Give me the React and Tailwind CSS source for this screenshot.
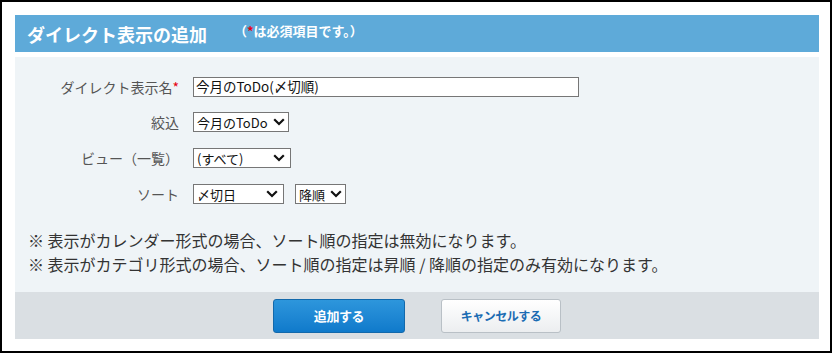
import React from "react";

const font = { fontFamily: '"Noto Sans CJK JP", "Noto Sans", sans-serif' };

const Chevron = () => (
  <svg width="12" height="8" viewBox="0 0 12 8" className="shrink-0">
    <path d="M1.2 1.2 L6 6 L10.8 1.2" fill="none" stroke="#111" strokeWidth="2.2" />
  </svg>
);

const FakeSelect = ({ value, width, pad = "pr-[5px]" }) => (
  <div
    className={`flex h-[20px] items-center justify-between border border-[#767676] bg-white pl-[3px] ${pad} text-[13px] leading-none text-[#111]`}
    style={{ width }}
  >
    <span className="whitespace-nowrap">{value}</span>
    <Chevron />
  </div>
);

const Row = ({ label, required, children }) => (
  <div className="flex h-[20px] items-center">
    <div className="w-[165px] pr-[1px] text-right text-[14px] leading-none text-[#555]">
      {label}
      {required && <span className="text-[#e60012]">*</span>}
    </div>
    <div className="ml-[13px] flex items-center gap-[11px]">{children}</div>
  </div>
);

export default function App() {
  return (
    <div
      className="h-[353px] w-[832px] border-2 border-black bg-white pl-[13px] pt-[13px]"
      style={font}
    >
      <div className="w-[804px]">
        {/* header */}
        <div className="flex h-[37px] items-center bg-[#5eaad9] pl-[12px]">
          <h2 className="text-[18px] font-bold leading-none text-white">ダイレクト表示の追加</h2>
          <span className="ml-[27px] -mt-[6px] text-[13px] font-bold leading-none text-white">
            （<span className="text-[#e60012]">*</span>は必須項目です。）
          </span>
        </div>

        {/* form body */}
        <div className="mt-[5px] h-[235px] bg-[#eff4f7] pt-[20px]">
          <div className="flex flex-col gap-[15px]">
            <Row label="ダイレクト表示名" required>
              <div className="flex h-[20px] w-[386px] items-center border border-[#767676] bg-white pl-[2px] text-[13.5px] leading-none text-[#111]">
                今月のToDo(〆切順)
              </div>
            </Row>
            <Row label="絞込">
              <FakeSelect value="今月のToDo" width="96px" pad="pr-[3px]" />
            </Row>
            <div className="mt-[1px]">
              <Row label="ビュー（一覧）">
                <FakeSelect value="(すべて)" width="98px" />
              </Row>
            </div>
            <div className="mt-[1px]">
              <Row label="ソート">
                <FakeSelect value="〆切日" width="91px" />
                <FakeSelect value="降順" width="51px" pad="pr-[3px]" />
              </Row>
            </div>
          </div>

          <div className="mt-[24px] pl-[13px] text-[16px] leading-[24px] text-[#333]">
            <p>※ 表示がカレンダー形式の場合、ソート順の指定は無効になります。</p>
            <p>※ 表示がカテゴリ形式の場合、ソート順の指定は昇順 / 降順の指定のみ有効になります。</p>
          </div>
        </div>

        {/* footer */}
        <div className="flex h-[47px] items-center justify-center gap-[36px] bg-[#dadfe3]">
          <button className="h-[34px] w-[132px] rounded-[3px] border border-[#1369ab] bg-gradient-to-b from-[#2d96dc] to-[#0f7acb] text-[13px] font-bold tracking-[-0.4px] text-white">
            追加する
          </button>
          <button className="h-[34px] w-[120px] rounded-[3px] border border-[#b9c0c6] bg-gradient-to-b from-white to-[#eceef0] text-[12px] font-bold tracking-[-0.5px] text-[#1b6cb3]">
            キャンセルする
          </button>
        </div>
      </div>
    </div>
  );
}
